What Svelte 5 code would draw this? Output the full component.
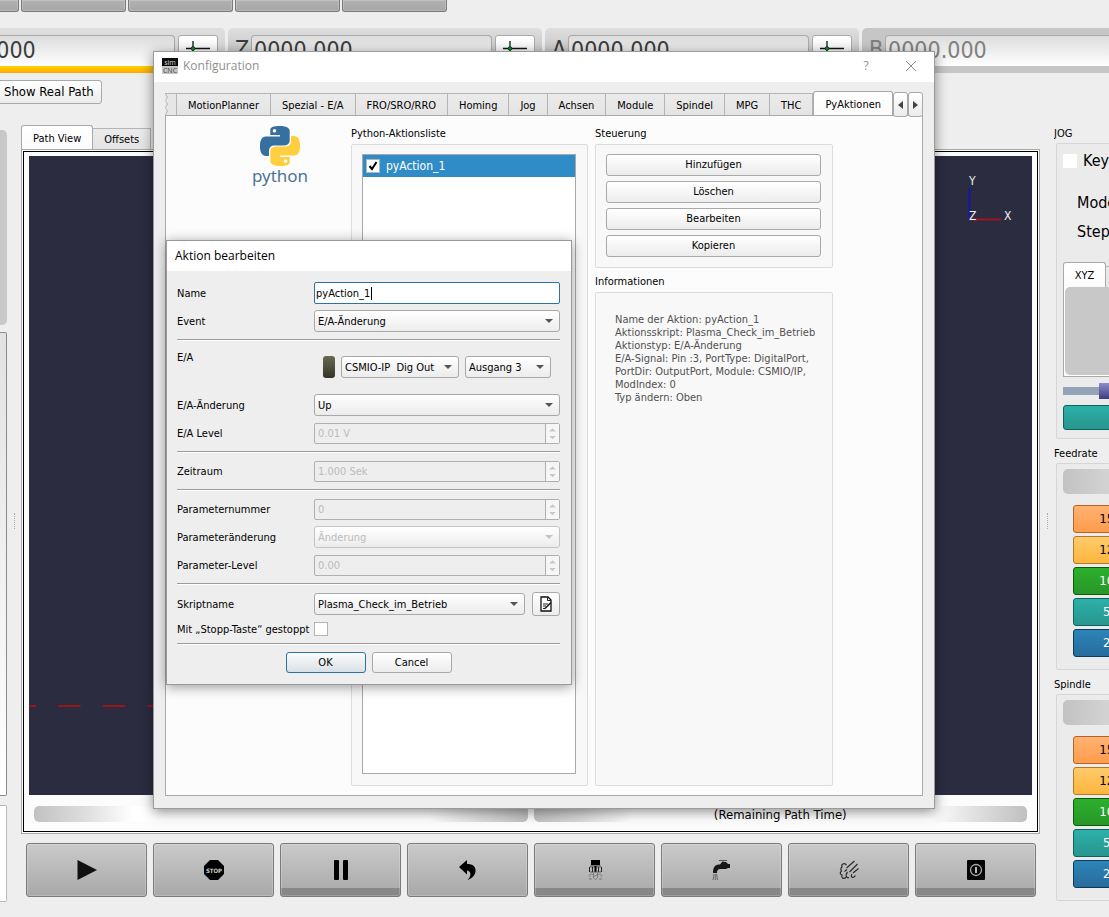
<script>
  const topButtons = ['Referenz', 'Sonde', 'Parken', 'Nullpunkt', 'Makro'];
  const axes = [
    { name: 'X', value: '0000.000', active: true },
    { name: 'Z', value: '0000.000' },
    { name: 'A', value: '0000.000' },
    { name: 'B', value: '0000.000', off: true }
  ];
  const tabs = ['MotionPlanner', 'Spezial - E/A', 'FRO/SRO/RRO', 'Homing', 'Jog', 'Achsen', 'Module', 'Spindel', 'MPG', 'THC', 'PyAktionen'];
  const controls = ['Hinzufügen', 'Löschen', 'Bearbeiten', 'Kopieren'];
  const info = [
    'Name der Aktion: pyAction_1',
    'Aktionsskript: Plasma_Check_im_Betrieb',
    'Aktionstyp: E/A-Änderung',
    'E/A-Signal: Pin :3, PortType: DigitalPort,',
    'PortDir: OutputPort, Module: CSMIO/IP,',
    'ModIndex: 0',
    'Typ ändern: Oben'
  ];
  const overrides = [
    { label: '150%', tone: 'orange' },
    { label: '125%', tone: 'amber' },
    { label: '100%', tone: 'green' },
    { label: '50%', tone: 'teal' },
    { label: '25%', tone: 'blue' }
  ];
  const machine = [
    { id: 'start', lamp: false },
    { id: 'stop', lamp: false },
    { id: 'pause', lamp: true },
    { id: 'rewind', lamp: false },
    { id: 'spindle', lamp: true },
    { id: 'flood', lamp: true },
    { id: 'mist', lamp: true },
    { id: 'power', lamp: true }
  ];
  let name = $state('pyAction_1');
  let enabled = $state(true);
  let stopped = $state(false);
</script>

{#snippet spin(id, value)}
  <span class="spin">
    <input {id} type="text" {value} disabled />
    <span class="steps">
      <svg viewBox="0 0 13 20" aria-hidden="true">
        <path d="M3 8h7L6.500 4.500zM3 12.500h7L6.500 16z" fill="#c8c8c8" />
      </svg>
    </span>
  </span>
{/snippet}

{#snippet combo(id, value, disabled)}
  <span class="combo" class:disabled>
    <select {id} {disabled} aria-label={value}><option>{value}</option></select>
  </span>
{/snippet}

{#snippet rates(title)}
  <section class="group">
    <h3>{title}</h3>
    <div class="frame rates">
      <div class="pill"></div>
      {#each overrides as o}
        <button class="rate {o.tone}">{o.label}</button>
      {/each}
    </div>
  </section>
{/snippet}

<div class="app">
  <div class="strip">
    {#each topButtons as b}
      <button class="metal" aria-label={b}></button>
    {/each}
  </div>

  <div class="dros">
    {#each axes as a}
      <div class="dro" class:active={a.active} class:off={a.off}>
        <span class="axis">{a.name}</span>
        <span class="value">{a.value}</span>
        <button class="zero" aria-label="{a.name} nullen">
          <svg viewBox="0 0 24 24" width="24" height="24" aria-hidden="true">
            <path d="M0 11.500h24M7 4v16" stroke="#111" stroke-width="1.300" />
            <circle cx="7" cy="11.500" r="1.800" fill="#0a9a0a" stroke="#042" />
          </svg>
        </button>
      </div>
    {/each}
  </div>

  <div class="actions"><button class="plain real">Show Real Path</button></div>

  <div class="main">
    <aside class="left">
      <div class="block"></div>
      <div class="panel tall"></div>
      <div class="panel short"></div>
    </aside>
    <div class="splitter"></div>

    <main class="center">
      <div class="viewtabs">
        <button class="tab on">Path View</button>
        <button class="tab">Offsets</button>
      </div>
      <div class="outer">
        <div class="inner">
          <div class="canvas">
            <svg class="triad" viewBox="0 0 50 50" width="50" height="50" aria-hidden="true">
              <path d="M4.500 13v32" stroke="#1414a8" stroke-width="2" />
              <path d="M5 44.500h31" stroke="#a01420" stroke-width="2" />
              <text x="4" y="10">Y</text>
              <text x="4" y="45">Z</text>
              <text x="39" y="45">X</text>
            </svg>
            <svg class="trace" width="50%" height="2" aria-hidden="true">
              <line x1="0" x2="100%" y1="1" y2="1" stroke="#98161c" stroke-width="2" stroke-dasharray="22 22.500" stroke-dashoffset="15" />
            </svg>
          </div>
          <div class="bars">
            <div class="bar"></div>
            <div class="bar">(Remaining Path Time)</div>
          </div>
        </div>
      </div>
      <div class="machine">
        {#each machine as m}
          <button class="metal" class:lamp={m.lamp} aria-label={m.id}>
            <svg viewBox="0 0 20 20" width="20" height="20" aria-hidden="true">
              {#if m.id === 'start'}
                <path d="M.5 0v20L20 10z" fill="#111" />
              {:else if m.id === 'stop'}
                <path d="M6 0h8l6 6v8l-6 6H6l-6-6V6z" fill="#000" />
                <text x="10" y="12.500" text-anchor="middle" class="stop">STOP</text>
              {:else if m.id === 'pause'}
                <rect x="3" width="5" height="20" rx="1" /><rect x="12" width="5" height="20" rx="1" />
              {:else if m.id === 'rewind'}
                <path d="M1 7 9 0v4c6 0 9 2.500 8.500 7.500C17 15.500 13 19 9.500 20c3.500-3.500 4.500-8.500-.5-9.500v4z" />
              {:else if m.id === 'spindle'}
                <path d="M6 0h9v5H6z" />
                <path d="M5.500 5h10l1 2.500h-12z" fill="#777" />
                <path d="M4.500 7v5M7.500 7v5M13.500 7v5M16.500 7v5" stroke="#222" />
                <path d="M10.500 6v6" stroke="#000" stroke-width="2" />
                <path d="M5 12h11" stroke="#444" stroke-width=".8" />
                <path d="M8.500 13v5l2 1.500 2-1.500v-5M8.500 16.500l4-2M8 14.500c-4-1-5 1.500-2.500 2.500M13 14.500c4-1 5 1.500 2.500 2.500M4 19h3M14 19h3" stroke="#777" stroke-width=".9" fill="none" />
              {:else if m.id === 'flood'}
                <path d="M7 .5h8M11 .5v2" stroke="#555" stroke-width="1.200" />
                <path d="M1 13c0-6 2-8.500 7-8.500L10 2h4l2 2h2v4h-2l-2 1H8C6 9 5 10 5 13z" fill="#1a1618" />
                <path d="M2 14l-1 6M3.300 14v6M4.500 14l1 6" stroke="#555" stroke-width=".8" />
              {:else if m.id === 'mist'}
                <path d="M15.500 1 7.500 8M18.500 4l-8 8M19.500 8.500l-5.500 4.500M7.500 5C5 2.500 2 4 3 7c-1.500 1-1.500 2.500-.5 4-2 1.500-1.500 3.500.5 4-1 3 1.500 4.500 4 2.500M8.500 12c-2.500 3-1.500 6.500 1.500 5.500M13 14c-2 2.500 1 5.500 3.500 1.500M5.500 11.500 8 9.500" stroke="#2c2c2c" stroke-width="1.200" fill="none" />
              {:else}
                <rect x="1" width="18" height="20" rx="1" fill="#050505" />
                <circle cx="10" cy="10" r="5.500" fill="none" stroke="#aaa" stroke-width="1.300" />
                <path d="M10 7v6" stroke="#bbb" stroke-width="2" />
              {/if}
            </svg>
          </button>
        {/each}
      </div>
    </main>
    <div class="splitter"></div>

    <aside class="right">
      <section class="group">
        <h3>JOG</h3>
        <div class="frame jog">
          <label class="key"><input type="checkbox" class="box borderless" />Keyboard</label>
          <p>Mode</p>
          <p>Step</p>
          <div class="jogtabs">
            <button class="tab on">XYZ</button>
            <button class="tab">ABC</button>
          </div>
          <div class="pad"><div></div></div>
          <div class="slider"><span></span></div>
          <button class="rate teal wide" aria-label="Jog"></button>
        </div>
      </section>
      {@render rates('Feedrate')}
      {@render rates('Spindle')}
    </aside>
  </div>

  <section class="window config" aria-label="Konfiguration">
    <header>
      <svg width="16" height="16" viewBox="0 0 16 16" aria-hidden="true">
        <rect width="16" height="9" fill="#0a0a0a" /><rect y="8" width="16" height="8" fill="#c4c4c4" />
        <text x="8" y="7" text-anchor="middle" class="logo" fill="#ddd">sim</text>
        <text x="8" y="14.500" text-anchor="middle" class="logo" fill="#444">CNC</text>
      </svg>
      <h2>Konfiguration</h2>
      <button class="bare" aria-label="Hilfe">?</button>
      <button class="bare" aria-label="Schließen">
        <svg width="12" height="12" viewBox="0 0 12 12" aria-hidden="true"><path d="M1 1l10 10M11 1 1 11" stroke="#8a8a8a" /></svg>
      </button>
    </header>
    <div class="body">
      <div class="tabbar">
        <svg class="torn" width="12" height="22" viewBox="0 0 12 22" aria-hidden="true">
          <path d="M0 .5h12V22H2L.5 19 3 16 1 12l2-4L.5 4 2 1z" fill="#e6e6e6" />
          <path d="M0 .5h12M0 .5l2.500 3.500-2 3.500 2 3.500-2 3.500 2 3.500-2 4M11.500 0v22" fill="none" stroke="#b4b4b4" />
        </svg>
        {#each tabs as t}
          <button class="tab" class:on={t === 'PyAktionen'}>{t}</button>
        {/each}
        <button class="scroll" aria-label="Zurück"><svg width="5" height="8" viewBox="0 0 5 8" aria-hidden="true"><path d="M5 0v8L0 4z" fill="#444" /></svg></button>
        <button class="scroll" aria-label="Weiter"><svg width="5" height="8" viewBox="0 0 5 8" aria-hidden="true"><path d="M0 0v8l5-4z" fill="#444" /></svg></button>
      </div>
      <div class="pane">
        <div class="python">
          <svg width="40" height="40" viewBox="0 0 24 24" aria-hidden="true">
            <path fill="#376f9f" d="M14.25.18l.9.2.73.26.59.3.45.32.34.34.25.34.16.33.1.3.04.26.02.2-.01.13V8.5l-.05.63-.13.55-.21.46-.26.38-.3.31-.33.25-.35.19-.35.14-.33.1-.3.07-.26.04-.21.02H8.77l-.69.05-.59.14-.5.22-.41.27-.33.32-.27.35-.2.36-.15.37-.1.35-.07.32-.04.27-.02.21v3.06H3.17l-.21-.03-.28-.07-.32-.12-.35-.18-.36-.26-.36-.36-.35-.46-.32-.59-.28-.73-.21-.88-.14-1.05-.05-1.23.06-1.22.16-1.04.24-.87.32-.71.36-.57.4-.44.42-.33.42-.24.4-.16.36-.1.32-.05.24-.01h.16l.06.01h8.16v-.83H6.18l-.01-2.75-.02-.37.05-.34.11-.31.17-.28.25-.26.31-.23.38-.2.44-.18.51-.15.58-.12.64-.1.71-.06.77-.04.84-.02 1.27.05zm-6.3 1.98l-.23.33-.08.41.08.41.23.34.33.22.41.09.41-.09.33-.22.23-.34.08-.41-.08-.41-.23-.33-.33-.22-.41-.09-.41.09z" />
            <path fill="#ffcf40" d="M21.04 6.11l.28.06.32.12.35.18.36.27.36.35.35.47.32.59.28.73.21.88.14 1.04.05 1.23-.06 1.23-.16 1.04-.24.86-.32.71-.36.57-.4.45-.42.33-.42.24-.4.16-.36.09-.32.05-.24.02-.16-.01h-8.22v.82h5.84l.01 2.76.02.36-.05.34-.11.31-.17.29-.25.25-.31.24-.38.2-.44.17-.51.15-.58.13-.64.09-.71.07-.77.04-.84.01-1.27-.04-1.07-.14-.9-.2-.73-.25-.59-.3-.45-.33-.34-.34-.25-.34-.16-.33-.1-.3-.04-.25-.02-.2.01-.13v-5.34l.05-.64.13-.54.21-.46.26-.38.3-.32.33-.24.35-.2.35-.14.33-.1.3-.06.26-.04.21-.02.13-.01h5.84l.69-.05.59-.14.5-.21.41-.28.33-.32.27-.35.2-.36.15-.36.1-.35.07-.32.04-.28.02-.21V6.07h2.09l.14.01zm-6.47 14.25l-.23.33-.08.41.08.41.23.33.33.23.41.08.41-.08.33-.23.23-.33.08-.41-.08-.41-.23-.33-.33-.23-.41-.08-.41.08z" />
          </svg>
          <span>python</span>
        </div>
        <section class="group grow">
          <h3>Python-Aktionsliste</h3>
          <div class="frame listframe">
            <div class="list">
              <label class="item"><input type="checkbox" class="box" bind:checked={enabled} />pyAction_1</label>
            </div>
          </div>
        </section>
        <div class="side">
          <section class="group">
            <h3>Steuerung</h3>
            <div class="frame controls">
              {#each controls as c}<button class="plain">{c}</button>{/each}
            </div>
          </section>
          <section class="group grow">
            <h3>Informationen</h3>
            <div class="frame info">
              {#each info as line}<p>{line}</p>{/each}
            </div>
          </section>
        </div>
      </div>
    </div>
  </section>

  <section class="window edit" aria-label="Aktion bearbeiten">
    <header><h2>Aktion bearbeiten</h2></header>
    <form onsubmit={(e) => e.preventDefault()}>
      <div class="row"><label for="name">Name</label><span class="field"><input id="name" class="text" type="text" bind:value={name} /><i></i></span></div>
      <div class="row"><label for="event">Event</label>{@render combo('event', 'E/A-Änderung', false)}</div>
      <hr />
      <div class="row io">
        <label for="device">E/A</label>
        <div class="signal">
          <span class="led"></span>
          <div class="device">{@render combo('device', 'CSMIO-IP\u00a0 Dig Out', false)}</div>
          <div class="port">{@render combo('port', 'Ausgang 3', false)}</div>
        </div>
      </div>
      <div class="row"><label for="change">E/A-Änderung</label>{@render combo('change', 'Up', false)}</div>
      <div class="row"><label for="level">E/A Level</label>{@render spin('level', '0.01 V')}</div>
      <hr />
      <div class="row"><label for="period">Zeitraum</label>{@render spin('period', '1.000 Sek')}</div>
      <hr />
      <div class="row"><label for="pnum">Parameternummer</label>{@render spin('pnum', '0')}</div>
      <div class="row"><label for="pchange">Parameteränderung</label>{@render combo('pchange', 'Änderung', true)}</div>
      <div class="row"><label for="plevel">Parameter-Level</label>{@render spin('plevel', '0.00')}</div>
      <hr />
      <div class="row">
        <label for="script">Skriptname</label>
        <div class="script">
          {@render combo('script', 'Plasma_Check_im_Betrieb', false)}
          <button type="button" class="plain pen" aria-label="Skript bearbeiten">
            <svg width="12" height="16" viewBox="0 0 12 16" aria-hidden="true">
              <path d="M1 1h7l3 3v11H1z" fill="#fff" stroke="#111" stroke-width="1.300" />
              <path d="M7.500 1v3.500H11M3 8h5M3 10h3M3 12.500h2" fill="none" stroke="#222" />
              <path d="M11.500 7 6 12.500l-1.500 1 .5-2L10.500 6z" fill="#111" />
            </svg>
          </button>
        </div>
      </div>
      <div class="row check"><label for="stopped">Mit „Stopp-Taste“ gestoppt</label><input id="stopped" type="checkbox" class="box" bind:checked={stopped} /></div>
      <hr />
      <div class="buttons">
        <button type="submit" class="plain default">OK</button>
        <button type="button" class="plain">Cancel</button>
      </div>
    </form>
  </section>
</div>

<style>
  :global(body) { background: #eee; overflow: hidden; }
  .app, .app * { box-sizing: border-box; }
  .app {
    position: relative; display: flex; flex-direction: column; height: 100vh; overflow: hidden;
    background: #eee; color: #000; font: 11px/16px "DejaVu Sans Condensed", "DejaVu Sans", sans-serif;
  }
  button, input, select { font: inherit; color: inherit; margin: 0; padding: 0; }
  h2, h3, p { margin: 0; font: inherit; }

  .metal {
    border: 1px solid #7a7a7a; border-radius: 3px; background: linear-gradient(#cacaca, #a8a8a8);
    box-shadow: inset 0 0 0 1px rgba(255, 255, 255, .2);
  }
  .strip { display: flex; gap: 2px; height: 12px; margin-left: -86px; flex: none; }
  .strip .metal { flex: 0 0 105px; border-top: 0; border-radius: 0 0 3px 3px; background: linear-gradient(#b2b2b2, #a6a6a6); }

  .dros { display: flex; gap: 3px; height: 45px; margin: 16px 0 0 -89px; flex: none; }
  .dro {
    display: flex; align-items: flex-start; flex: 0 0 314px; height: 45px; padding: 7px 7px 0 7px; border-radius: 5px;
    background: linear-gradient(#dedede, #b4b4b4); color: #3c3c3c; font-size: 23px; line-height: 28px; overflow: hidden;
  }
  .dro.active { background: linear-gradient(#ffd000, #ffaa00) bottom / 100% 7px no-repeat, linear-gradient(#dedede, #d0d0d0); }
  .dro.off { background: #c6c6c6; color: #808080; }
  .axis { width: 16px; }
  .value {
    flex: 1; height: 31px; padding-left: 2px; border-radius: 4px 4px 0 0; border: 1px solid #aaa; border-bottom: 0;
    background: linear-gradient(#dcdcdc, #fff); margin-right: 3px;
  }
  .zero { width: 40px; height: 28px; border: 1px solid #aaa; border-radius: 3px; background: linear-gradient(#fff, #eee); display: grid; place-items: center; }

  .plain { border: 1px solid #a9a9a9; border-radius: 3px; background: linear-gradient(#fff, #ececec); }
  .actions { margin: 7px 0 0 -4px; height: 24px; flex: none; }
  .real { height: 24px; padding: 0 7px; font-size: 13px; }

  .main { display: flex; flex: 1; min-height: 0; margin-top: 21px; }
  .left { flex: 0 0 7px; display: flex; flex-direction: column; padding: 5px 0 15px; }
  .block { height: 195px; background: #c8c8c8; border-radius: 0 5px 5px 0; }
  .panel { border: 1px solid #8a8a8a; border-left: 0; background: linear-gradient(#e2e2e2, #fff); border-radius: 0 2px 2px 0; }
  .tall { flex: 1; margin: 7px 0 9px; }
  .short { height: 97px; border-color: #b8b8b8; background: #fff; }
  .splitter { flex: 0 0 14px; display: flex; align-items: center; justify-content: center; }
  .splitter::before { content: ''; height: 16px; border-left: 1px dotted #aaa; }

  .center { flex: 1; min-width: 0; display: flex; flex-direction: column; padding-bottom: 20px; }
  .tab { height: 21px; padding-top: 1px; border: 1px solid #b4b4b4; border-width: 1px 1px 0 0; background: linear-gradient(#ebebeb, #e4e4e4); white-space: nowrap; }
  .tab.on { background: linear-gradient(#fff, #fbfbfb); border-color: #a9a9a9; border-left-width: 1px; border-radius: 3px 3px 0 0; position: relative; }
  .viewtabs { display: flex; align-items: flex-end; height: 24px; }
  .viewtabs .tab { padding: 2px 11px 0; }
  .viewtabs .tab.on { height: 24px; }
  .outer { flex: 1; min-height: 0; display: flex; border: 1px solid #a9a9a9; padding: 1px; background: #fcfcfc; }
  .inner { flex: 1; display: flex; flex-direction: column; border: 1px solid #000; padding: 4px 5px; }
  .canvas { flex: 1; background: #2c2c41; display: flex; flex-direction: column; justify-content: space-between; }
  .triad { align-self: flex-end; margin: 19px 17px 0 0; fill: #eee; }
  .triad text { font-size: 12px; }
  .trace { margin-bottom: 88px; }
  .bars { display: flex; gap: 6px; padding: 11px 5px 5px; }
  .bar {
    flex: 1; height: 16px; border-radius: 5px; text-align: center; font-size: 13px; line-height: 18px; overflow: hidden;
    background: linear-gradient(90deg, #c2c2c2, #dcdcdc 10%, #fff 20%, #fff 80%, #dedede 90%, #c0c0c0);
  }
  .machine { display: flex; gap: 6px; margin: 9px 4px 0 5px; }
  .machine .metal { flex: 1; height: 54px; display: grid; place-items: center; }
  .machine .lamp { background: linear-gradient(#888, #888) bottom / 100% 8px no-repeat, linear-gradient(#cacaca, #a8a8a8); }
  .stop { font-size: 6px; font-weight: 700; fill: #ccc; }

  .right { flex: 0 0 55px; overflow: hidden; display: flex; flex-direction: column; gap: 6px; }
  .right .group { width: 180px; }
  .group { display: flex; flex-direction: column; }
  .group h3 { margin-bottom: 2px; height: 16px; }
  .frame { border: 1px solid #d6d6d6; border-radius: 2px; background: #ebebeb; }
  .right h3 { line-height: 18px; }
  .right .frame { margin-left: 2px; padding: 5px 6px; }
  .right .jog { height: 296px; padding-top: 6px; font-size: 16px; display: flex; flex-direction: column; }
  .key { display: flex; align-items: center; gap: 6px; height: 22px; margin-bottom: 16px; flex: none; }
  .jog p { height: 29px; line-height: 29px; padding-left: 14px; flex: none; }
  .jogtabs { display: flex; align-items: flex-end; font-size: 11px; margin-top: 16px; flex: none; }
  .jogtabs .tab { width: 43px; }
  .jogtabs .tab.on { height: 25px; }
  .pad { height: 90px; flex: none; border: 1px solid #a9a9a9; border-top: 0; padding: 0 0 1px 1px; background: #fff; }
  .pad div { height: 100%; border-radius: 5px; background: #c8c8c8; }
  .slider { height: 8px; margin: 10px 0; background: #94a3b5; flex: none; }
  .slider span { display: block; width: 14px; height: 16px; margin-left: 36px; position: relative; top: -4px; background: linear-gradient(#8c8ccc, #3c3c80); }
  .pill { height: 25px; border-radius: 5px; background: linear-gradient(90deg, #c2c2c2, #fff); margin-bottom: 11px; }
  .rates { height: 207px; }
  .rate { display: block; width: 86px; height: 28px; margin: 0 0 3px 10px; border: 1px solid; border-radius: 3px; font-size: 13px; }
  .rate.wide { width: 160px; height: 25px; margin-left: 0; flex: none; }
  .orange { background: linear-gradient(#ffb272, #ff9c4c); border-color: #b46428; }
  .amber { background: linear-gradient(#ffca6c, #fdb63e); border-color: #b07a20; }
  .green { background: linear-gradient(#2cb02c, #289628); border-color: #0c5c0c; color: #fff; }
  .teal { background: linear-gradient(#2cb0a8, #28968e); border-color: #0c625c; color: #fff; }
  .blue { background: linear-gradient(#2c84b8, #286c9c); border-color: #0c3c5c; color: #fff; }

  .window { position: absolute; display: flex; flex-direction: column; background: #eee; border: 1px solid #9a9a9a; }
  .window header { display: flex; align-items: center; height: 30px; background: #fff; font-family: "Open Sans", "Noto Sans", sans-serif; font-size: 12px; flex: none; }
  .config { left: 153px; top: 51px; right: 174px; bottom: 108px; box-shadow: 0 3px 12px rgba(0, 0, 0, .45); }
  .window.config header { padding: 0 15px 2px 8px; color: #8f8f8f; }
  .config h2 { flex: 1; margin-left: 5px; }
  .logo { font-size: 7px; }
  .bare { width: 16px; height: 16px; border: 0; background: none; margin-left: 29px; display: grid; place-items: center; }
  .body { flex: 1; display: flex; flex-direction: column; padding: 9px 11px 12px; min-height: 0; }
  .tabbar { display: flex; align-items: flex-end; height: 24px; flex: none; }
  .torn { flex: none; }
  .tabbar .tab { flex: 1 1 auto; padding: 2px 8px 0; height: 22px; }
  .tabbar .tab.on { height: 24px; }
  .scroll { width: 15px; height: 25px; margin-bottom: -2px; border: 1px solid #a9a9a9; border-radius: 3px; background: linear-gradient(#fff, #ececec); display: grid; place-items: center; flex: none; position: relative; }
  .pane { flex: 1; min-height: 0; display: grid; grid-template-columns: 178px 237px 238px; gap: 7px; border: 1px solid #a9a9a9; background: #fcfcfc; padding: 10px 0 9px; }
  .python { justify-self: end; width: 56px; margin-right: 36px; display: flex; flex-direction: column; align-items: center; }
  .python span { font: 17px/20px "Noto Sans", sans-serif; color: #4f7396; }
  .pane .frame { border-color: #dcdcdc; background: #f8f8f8; }
  .grow { flex: 1; min-height: 0; }
  .grow .frame { flex: 1; }
  .listframe { padding: 9px 11px 11px 10px; display: flex; }
  .list { flex: 1; border: 1px solid #a9a9a9; background: #fff; }
  .item { display: flex; align-items: center; gap: 6px; height: 22px; padding-left: 3px; background: #308cc6; color: #fff; font-size: 12px; }
  .side { display: flex; flex-direction: column; gap: 6px; }
  .controls { display: flex; flex-direction: column; gap: 5px; padding: 9px 11px 10px 10px; }
  .controls .plain { height: 22px; }
  .info { padding: 20px 19px; color: #505050; line-height: 13px; }
  .info p { white-space: nowrap; }

  .box { appearance: none; width: 14px; height: 14px; border: 1px solid #b4b4b4; background: #fff; flex: none; }
  .borderless { border-color: #fff; }
  .box:checked { background: #fff url("data:image/svg+xml,%3Csvg xmlns='http://www.w3.org/2000/svg' viewBox='0 0 12 12'%3E%3Cpath d='M2.500 6l2.500 3 4.500-7' fill='none' stroke='%23000' stroke-width='2'/%3E%3C/svg%3E"); }

  .edit { left: 166px; top: 240px; width: 406px; box-shadow: 0 2px 12px rgba(0, 0, 0, .4); }
  .edit header { padding-left: 8px; }
  form { display: flex; flex-direction: column; gap: 6px; padding: 11px 11px 11px 10px; }
  .row { display: grid; grid-template-columns: 137px 1fr; align-items: center; height: 22px; white-space: nowrap; }
  .row label { padding-top: 2px; }
  .row.io { height: 40px; align-items: start; }
  .row.check { height: 16px; }
  hr { width: 100%; height: 2px; margin: 1px 0; border: 0; border-top: 1px solid #9c9c9c; background: #fff; }
  .field { display: flex; height: 22px; align-items: center; border: 1px solid #2c72a2; border-radius: 2px; background: #fff; padding-left: 1px; }
  .text { border: 0; outline: 0; background: none; width: 55px; padding-top: 1px; }
  .field i { width: 1px; height: 13px; background: #000; }
  .combo { position: relative; display: block; min-width: 0; flex: 1; }
  select { appearance: none; display: block; width: 100%; height: 22px; border: 1px solid #a9a9a9; border-radius: 3px; background: linear-gradient(#fff, #ececec); padding: 2px 18px 0 3px; }
  .combo::after { content: ''; position: absolute; right: 7px; top: 9px; border: 4px solid transparent; border-top-color: #555; border-bottom: 0; pointer-events: none; }
  .combo.disabled select { border-color: #c4c4c4; color: #bcbcbc; opacity: 1; }
  .combo.disabled::after { border-top-color: #c4c4c4; }
  .signal { display: flex; gap: 6px; padding: 8px 9px 0; }
  .led { width: 12px; height: 22px; border-radius: 3px; background: linear-gradient(#6a6a50, #34342a); }
  .device { width: 118px; }
  .port { width: 86px; }
  .spin { display: flex; height: 21px; border: 1px solid #b0b0b0; border-radius: 2px; }
  .spin input { flex: 1; min-width: 0; border: 0; background: none; padding: 2px 0 0 3px; color: #bcbcbc; }
  .steps { width: 14px; border-left: 1px solid #b0b0b0; background: #f6f6f6; }
  .steps svg { display: block; width: 13px; height: 19px; }
  .script { display: flex; gap: 7px; align-items: center; }
  .pen { width: 28px; height: 24px; display: grid; place-items: center; flex: none; }
  .buttons { display: flex; justify-content: center; gap: 6px; }
  .buttons .plain { width: 80px; height: 21px; }
  .default { border-color: #2c72a2; background: linear-gradient(#fafcfd, #d9e0e6); }
</style>
